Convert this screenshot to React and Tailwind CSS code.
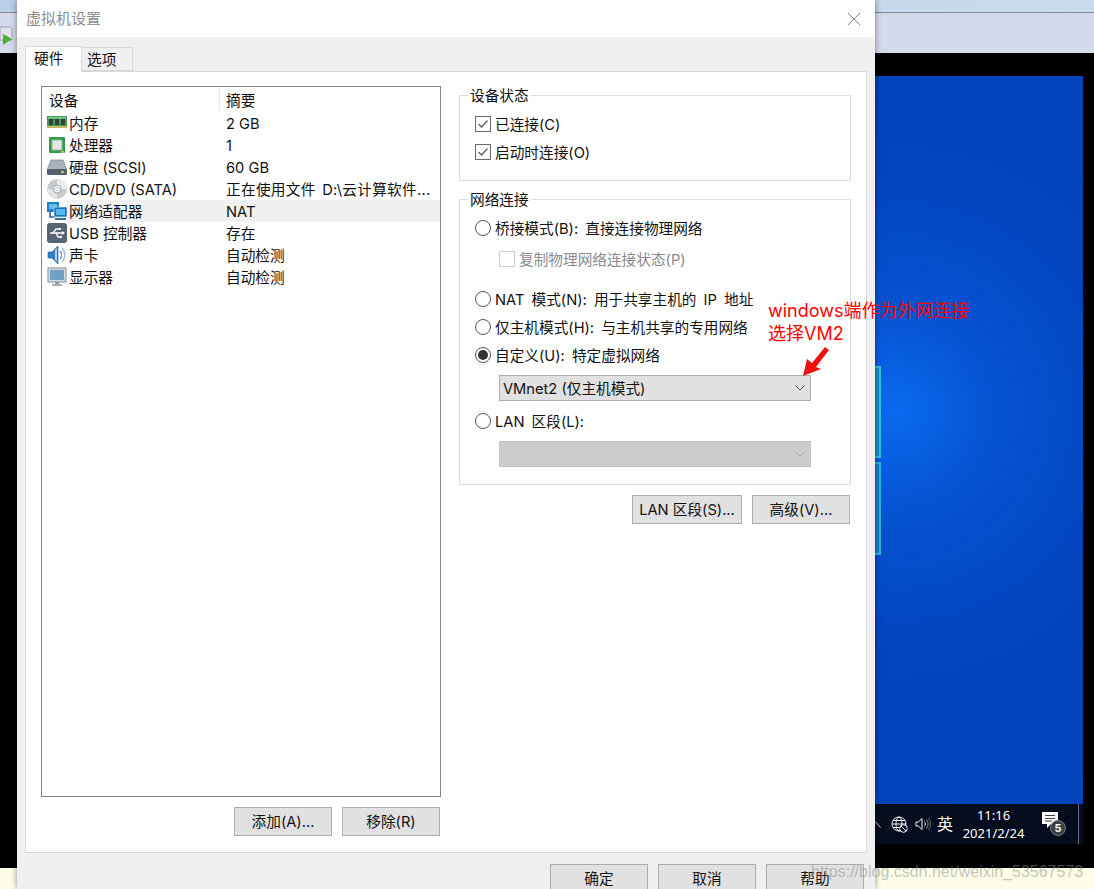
import React from "react";

const devices = [
  { icon: "ram", name: "内存", summary: "2 GB" },
  { icon: "cpu", name: "处理器", summary: "1" },
  { icon: "hdd", name: "硬盘 (SCSI)", summary: "60 GB" },
  { icon: "cd", name: "CD/DVD (SATA)", summary: "正在使用文件 D:\\云计算软件...", wide: true },
  { icon: "net", name: "网络适配器", summary: "NAT", selected: true },
  { icon: "usb", name: "USB 控制器", summary: "存在" },
  { icon: "sound", name: "声卡", summary: "自动检测" },
  { icon: "display", name: "显示器", summary: "自动检测" },
];

function DeviceIcon({ name }) {
  return (
    <svg width="20" height="20" viewBox="0 0 20 20" className="flex-none">
      {name === "ram" && (
        <g>
          <rect x="0" y="3" width="20" height="12" fill="#3f9a55" />
          <rect x="1" y="4" width="18" height="1.5" fill="#8ccf94" />
          <rect x="2" y="6" width="4" height="6" fill="#34413a" />
          <rect x="8" y="6" width="4" height="6" fill="#34413a" />
          <rect x="14" y="6" width="4" height="6" fill="#34413a" />
          <rect x="0" y="13" width="20" height="2" fill="#c9b765" />
        </g>
      )}
      {name === "cpu" && (
        <g>
          <rect x="2" y="2" width="16" height="16" rx="1" fill="#2f9a4c" />
          <rect x="5" y="5" width="10" height="10" fill="#e4e8e2" stroke="#8fb897" />
          <rect x="14" y="16" width="3" height="2" fill="#c9b765" />
        </g>
      )}
      {name === "hdd" && (
        <g>
          <path d="M4 3H16L20 13H0Z" fill="#a9b3bc" stroke="#69747e" strokeWidth="0.6" />
          <rect x="0" y="12" width="20" height="6" rx="1" fill="#56616b" />
          <rect x="14" y="14" width="3" height="2" fill="#9fd08f" />
        </g>
      )}
      {name === "cd" && (
        <g>
          <circle cx="10" cy="10" r="10" fill="#c6c9cc" />
          <path d="M10 0A10 10 0 0 1 20 10L10 10Z" fill="#e8eaec" />
          <path d="M10 20A10 10 0 0 1 0 10L10 10Z" fill="#e2e4e6" />
          <circle cx="10" cy="10" r="4" fill="#eef0f1" stroke="#a5a9ad" />
          <circle cx="10" cy="10" r="1.5" fill="#fff" stroke="#9a9ea2" strokeWidth="0.5" />
        </g>
      )}
      {name === "net" && (
        <g>
          <rect x="0" y="1" width="12" height="10" fill="#1f7fc4" />
          <rect x="2" y="3" width="8" height="5" fill="#6bb8ea" />
          <path d="M3 11V16H8" fill="none" stroke="#22628f" strokeWidth="1.5" />
          <rect x="7" y="6" width="13" height="10" fill="#1c76bd" stroke="#e8f0f6" strokeWidth="0.6" />
          <rect x="9" y="8" width="9" height="6" fill="#57b7f0" />
          <rect x="8" y="17" width="11" height="2" fill="#2a6f9f" />
        </g>
      )}
      {name === "usb" && (
        <g>
          <rect x="0" y="0" width="20" height="20" rx="3" fill="#556574" />
          <path d="M3 10H16M6 10L9 6H12M9 10L11 14H13" fill="none" stroke="#fff" strokeWidth="1.3" />
          <path d="M15 8L18 10L15 12Z" fill="#fff" />
          <rect x="12" y="5" width="2" height="2" fill="#fff" />
          <circle cx="14" cy="14" r="1.2" fill="#fff" />
        </g>
      )}
      {name === "sound" && (
        <g>
          <path d="M1 7H5L11 1V19L5 13H1Z" fill="#2f7fc8" stroke="#1d5c98" strokeWidth="0.6" />
          <path d="M8 5L10 3V17L8 15Z" fill="#a9d4f4" />
          <path d="M13 6A6 6 0 0 1 13 14" fill="none" stroke="#5f97c7" strokeWidth="1.4" />
          <path d="M15 3A10 10 0 0 1 15 17" fill="none" stroke="#9bbbd8" strokeWidth="1.4" />
        </g>
      )}
      {name === "display" && (
        <g>
          <rect x="1" y="1" width="18" height="14" fill="#d6dde3" stroke="#7f8d99" />
          <rect x="3" y="3" width="14" height="10" fill="#6fa0c6" />
          <rect x="8" y="15" width="4" height="2" fill="#8b98a3" />
          <rect x="5" y="17" width="10" height="2" fill="#a8b2bb" />
        </g>
      )}
    </svg>
  );
}

function Chevron({ className }) {
  return (
    <svg width="10" height="6" viewBox="0 0 10 6" className={className}>
      <path d="M0.5 0.5L5 5L9.5 0.5" fill="none" stroke="currentColor" />
    </svg>
  );
}

function Checkbox({ label, hotkey, disabled }) {
  return (
    <div className={`h-[28px] flex items-center ${disabled ? "text-[#8a8a8a]" : ""}`}>
      <div className={`w-[16px] h-[16px] flex-none border bg-white flex items-center justify-center ${disabled ? "border-[#cccccc]" : "border-[#6a6a6a]"}`}>
        {!disabled && (
          <svg width="12" height="10" viewBox="0 0 12 10">
            <path d="M1.5 5L4.5 8L10.5 1.5" fill="none" stroke="#606060" strokeWidth="1.3" />
          </svg>
        )}
      </div>
      <span className="ml-[4px] pt-[2px]">{label}{hotkey}</span>
    </div>
  );
}

function Radio({ label, checked }) {
  return (
    <div className="h-[28px] flex items-center">
      <div className="w-[16px] h-[16px] flex-none rounded-full border border-[#555555] bg-white flex items-center justify-center">
        {checked && <div className="w-[10px] h-[10px] rounded-full bg-[#333333]" />}
      </div>
      <span className="ml-[4px] pt-[2px] [word-spacing:3px]">{label}</span>
    </div>
  );
}

function Button({ children, className = "" }) {
  return (
    <div className={`h-[29px] flex-none flex items-center justify-center border border-[#adadad] bg-[#e1e1e1] ${className}`}>
      {children}
    </div>
  );
}

function GroupBox({ title, children, className = "" }) {
  return (
    <div className={`border border-[#dcdcdc] pl-[15px] pr-[15px] ${className}`}>
      <div className="w-fit h-[20px] -mt-[11px] ml-[-7px] px-[2px] pt-[1px] bg-white leading-[20px]">{title}</div>
      {children}
    </div>
  );
}

function Tray() {
  return (
    <div className="h-[40px] flex-none bg-[#040c1e] flex items-center justify-end pr-[4px] text-white">
      <svg width="11" height="7" viewBox="0 0 11 7" className="flex-none">
        <path d="M0.5 6.5L5.5 0.8L10.5 6.5" fill="none" stroke="#d8d8d8" />
      </svg>
      <svg width="17" height="17" viewBox="0 0 17 17" className="ml-[10px] flex-none">
        <circle cx="8" cy="8" r="7" fill="none" stroke="#f2f2f2" />
        <ellipse cx="8" cy="8" rx="3" ry="7" fill="none" stroke="#f2f2f2" />
        <path d="M1 8H15M2 4.5H14M2 11.5H14" stroke="#f2f2f2" />
        <circle cx="12.5" cy="12.5" r="3.8" fill="#040c1e" stroke="#f2f2f2" />
        <path d="M10 10L15 15" stroke="#f2f2f2" />
      </svg>
      <svg width="16" height="14" viewBox="0 0 16 14" className="ml-[7px] flex-none">
        <path d="M1 5H3.5L7 1.5V12.5L3.5 9H1Z" fill="none" stroke="#f2f2f2" />
        <path d="M9.5 4.5A4 4 0 0 1 9.5 9.5" fill="none" stroke="#c8c8c8" />
        <path d="M11.5 2.5A7 7 0 0 1 11.5 11.5" fill="none" stroke="#8f8f8f" />
        <path d="M13.5 1A9.5 9.5 0 0 1 13.5 13" fill="none" stroke="#6a6a6a" />
      </svg>
      <span className="ml-[6px] w-[17px] text-[16px] leading-none">英</span>
      <div className="ml-[10px] w-[59px] flex flex-col items-center text-[13px] leading-[18px] whitespace-nowrap [font-family:'Noto_Sans',sans-serif]">
        <span>11:16</span>
        <span>2021/2/24</span>
      </div>
      <div className="ml-[19px] w-[24px] h-[24px] relative flex-none">
        <svg width="17" height="16" viewBox="0 0 17 16" className="absolute left-0 top-0">
          <path d="M0 0H16V12H9L5 16V12H0Z" fill="#ffffff" />
          <path d="M3 3.5H13M3 6.5H13M3 9H10" stroke="#3a3f4a" />
        </svg>
        <div className="absolute right-0 bottom-0 w-[16px] h-[16px] rounded-full bg-[#3b3e45] border border-[#777777] flex items-center justify-center text-[11px] font-bold leading-none">5</div>
      </div>
      <div className="ml-[12px] w-px h-[40px] bg-[#6a7078]" />
    </div>
  );
}

export default function App() {
  return (
    <div className="relative w-[1094px] h-[889px] overflow-hidden flex flex-col bg-black text-[14.67px] text-[#111111] [font-family:'Inter','Noto_Sans_CJK_SC',sans-serif]">
      {/* window behind the dialog */}
      <div className="h-[13px] flex-none border-b border-[#85888c] bg-gradient-to-r from-[#b9cfe6] to-[#c9dcee]" />
      <div className="h-[40px] flex-none bg-[#d4d9ec] flex items-end pb-[7px]">
        <svg width="17" height="20" viewBox="0 0 17 20">
          <path d="M0 1H10L12 3V14H0Z" fill="#dfe3ea" stroke="#8a8f96" strokeWidth="0.7" />
          <path d="M3 8L12 13L3 19Z" fill="#46b32e" />
        </svg>
      </div>
      <div className="h-[815px] flex-none pt-[23px] pb-[24px] pl-[17px] pr-[11px] flex flex-col">
        <div className="relative flex-1 bg-[radial-gradient(circle_at_878px_335px,#0a6af0_0%,#0553d2_100px,#0444bd_240px,#043bb1_100%)]">
          <div className="absolute left-[833px] top-[290px] w-[31px] h-[92px] border-2 border-[#33c4dc] bg-[#1a8ccb]" />
          <div className="absolute left-[833px] top-[386px] w-[31px] h-[93px] border-2 border-[#2bb6dc] bg-[#1a7fc8]" />
        </div>
        <Tray />
      </div>
      <div className="flex-1 bg-[#fdfde8]" />

      {/* dialog */}
      <div className="absolute left-[17px] top-0 w-[858px] h-[889px] overflow-hidden flex flex-col bg-[#f0f0f0] shadow-[0_0_6px_rgba(0,0,0,0.45)]">
        <div className="h-[37px] flex-none bg-white flex items-center justify-between pl-[9px] pr-[14px]">
          <span className="text-[15px] pt-[2px] text-[#8f8f8f]">虚拟机设置</span>
          <svg width="14" height="14" viewBox="0 0 14 14">
            <path d="M1 1L13 13M13 1L1 13" stroke="#808080" />
          </svg>
        </div>
        <div className="px-[8px] pt-[9px] flex-1 flex flex-col">
          <div className="flex items-end h-[26px] relative z-10 -mb-px">
            <div className="w-[57px] h-[26px] bg-white border border-b-0 border-[#d9d9d9] pl-[8px] pt-[1px]">硬件</div>
            <div className="w-[51px] h-[24px] mb-px bg-[#f0f0f0] border border-l-0 border-[#d9d9d9] pl-[5px] pt-[1px]">选项</div>
          </div>
          <div className="h-[782px] flex-none bg-white border border-[#d9d9d9] flex pl-[15px]">
            <div className="w-[400px] flex-none pt-[14px] flex flex-col">
              <div className="h-[711px] border border-[#82878d] flex flex-col">
                <div className="h-[25px] flex-none flex items-center">
                  <div className="w-[177px] pl-[7px] pt-[2px]">设备</div>
                  <div className="w-px h-[23px] bg-[#e5e5e5]" />
                  <div className="pl-[6px] pt-[2px]">摘要</div>
                </div>
                {devices.map((device) => (
                  <div key={device.name} className="h-[22px] flex-none flex items-center pl-[5px]">
                    <DeviceIcon name={device.icon} />
                    <div className={`h-[22px] flex-1 flex items-center pl-[2px] pt-[2px] pr-[7px] whitespace-nowrap ${device.selected ? "bg-[#f0f0f0]" : ""}`}>
                      <span className="w-[157px] flex-none">{device.name}</span>
                      <span className={`flex-1 truncate ${device.wide ? "[word-spacing:2px] tracking-[0.3px]" : ""}`}>{device.summary}</span>
                    </div>
                  </div>
                ))}
              </div>
              <div className="mt-[10px] flex justify-end gap-[10px] pr-[1px]">
                <Button className="w-[98px]">添加(A)...</Button>
                <Button className="w-[98px]">移除(R)</Button>
              </div>
            </div>
            <div className="ml-[18px] w-[392px] flex-none pt-[23px] flex flex-col">
              <GroupBox title="设备状态" className="h-[86px]">
                <div className="mt-[5px]">
                  <Checkbox label="已连接" hotkey="(C)" />
                  <Checkbox label="启动时连接" hotkey="(O)" />
                </div>
              </GroupBox>
              <GroupBox title="网络连接" className="mt-[18px] h-[286px]">
                <div className="mt-[5px]">
                  <Radio label="桥接模式(B): 直接连接物理网络" />
                  <div className="mt-[3px] pl-[24px]">
                    <Checkbox label="复制物理网络连接状态" hotkey="(P)" disabled />
                  </div>
                  <div className="mt-[12px]">
                    <Radio label="NAT 模式(N): 用于共享主机的 IP 地址" />
                    <Radio label="仅主机模式(H): 与主机共享的专用网络" />
                    <Radio label="自定义(U): 特定虚拟网络" checked />
                  </div>
                  <div className="mt-[6px] ml-[24px] w-[312px] h-[26px] border border-[#adadad] bg-[#e1e1e1] flex items-center justify-between pl-[3px] pr-[5px]">
                    <span className="pt-[2px]">VMnet2 (仅主机模式)</span>
                    <Chevron className="text-[#555555]" />
                  </div>
                  <div className="mt-[6px]">
                    <Radio label="LAN 区段(L):" />
                  </div>
                  <div className="mt-[6px] ml-[24px] w-[312px] h-[26px] border border-[#c4c4c4] bg-[#cccccc] flex items-center justify-end pr-[5px]">
                    <Chevron className="text-[#a8a8a8]" />
                  </div>
                </div>
              </GroupBox>
              <div className="mt-[10px] flex justify-end gap-[10px] pr-[1px]">
                <Button className="w-[110px]">LAN 区段(S)...</Button>
                <Button className="w-[98px]">高级(V)...</Button>
              </div>
            </div>
          </div>
          <div className="mt-[11px] flex justify-end gap-[10px] pr-[3px]">
            <Button className="w-[98px]">确定</Button>
            <Button className="w-[98px]">取消</Button>
            <Button className="w-[98px]">帮助</Button>
          </div>
        </div>
      </div>

      {/* red note pasted over the screenshot */}
      <div className="absolute left-[768px] top-[299px] text-[18px] leading-[23px] text-[#ff0000] whitespace-nowrap">
        <div>windows端作为外网连接</div>
        <div>选择VM2</div>
      </div>
      <svg width="34" height="34" viewBox="0 0 34 34" className="absolute left-[799px] top-[345px]">
        <path d="M4 31L8 14L13 18L26 2L30 5L17 22L22 24Z" fill="#f01010" />
      </svg>
      <div className="absolute left-[811px] top-[860px] text-[16px] text-[#8c8c8c]/50 whitespace-nowrap [font-family:'Liberation_Sans',sans-serif]">
        https://blog.csdn.net/weixin_53567573
      </div>
    </div>
  );
}
